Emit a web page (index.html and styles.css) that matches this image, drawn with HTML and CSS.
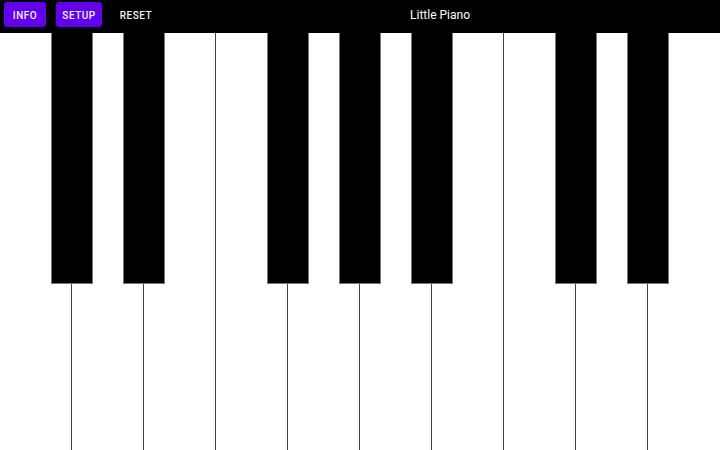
FILE: index.html
```html
<!DOCTYPE html>
<html>
<head>
<meta charset="utf-8">
<link rel="stylesheet" href="styles.css">
</head>
<body>
<header class="bar">
  <div class="actions">
    <button class="btn filled info">INFO</button>
    <button class="btn filled setup">SETUP</button>
    <button class="btn text reset">RESET</button>
  </div>
  <div class="title">Little Piano</div>
</header>
<main class="keyboard">
  <div class="white"><div class="black"></div></div>
  <div class="white"><div class="black"></div></div>
  <div class="white"></div>
  <div class="white"><div class="black"></div></div>
  <div class="white"><div class="black"></div></div>
  <div class="white"><div class="black"></div></div>
  <div class="white"></div>
  <div class="white"><div class="black"></div></div>
  <div class="white"><div class="black"></div></div>
  <div class="white"></div>
</main>
</body>
</html>
```
FILE: styles.css
```css
html, body {
  margin: 0;
  padding: 0;
  width: 720px;
  height: 450px;
  overflow: hidden;
  background: #fff;
  font-family: Roboto, "Liberation Sans", sans-serif;
}
.bar {
  height: 33px;
  background: #000;
  display: flex;
  align-items: flex-start;
}
.actions {
  display: flex;
  padding: 2px 0 0 4px;
  gap: 10px;
}
.btn {
  height: 25px;
  border: none;
  border-radius: 3px;
  font-family: Roboto, "Liberation Sans", sans-serif;
  font-weight: 500;
  font-size: 10px;
  letter-spacing: 0.5px;
  color: #f2f2f2;
  padding: 2px 0 0 0;
  margin: 0;
  cursor: pointer;
}
.filled {
  background: #6200ee;
}
.text {
  background: transparent;
}
.info { width: 42px; }
.setup { width: 46px; }
.reset { width: 48px; margin-left: 0; }
.title {
  flex: 1;
  text-align: center;
  color: #fff;
  font-size: 12px;
  line-height: 15px;
  padding-top: 8px;
}
.keyboard {
  display: flex;
  height: 417px;
}
.white {
  position: relative;
  width: 71px;
  border-right: 1px solid #444;
  background: #fff;
}
.white:last-child {
  border-right: none;
  width: 72px;
}
.black {
  position: absolute;
  top: 0;
  right: -22px;
  width: 40px;
  height: 250px;
  background: #000;
  border: 1px solid #777;
  border-top: none;
  z-index: 1;
}
```
